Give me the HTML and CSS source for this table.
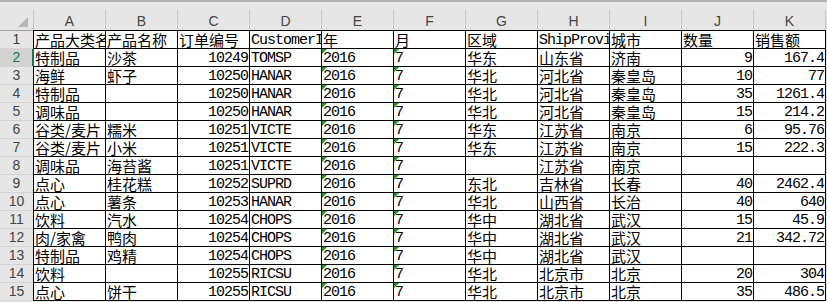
FILE: index.html
```html
<!DOCTYPE html>
<html lang="zh-CN">
<head>
<meta charset="utf-8">
<title>Sheet1</title>
<link rel="stylesheet" href="styles.css">
</head>
<body>
<div class="strip"></div>
<div class="sheet">
  <div class="corner"><svg width="33" height="20" viewBox="0 0 33 20"><polygon points="28,7 28,17 18,17" fill="#b7b7b7"/></svg></div>
  <div class="ch">A</div><div class="ch">B</div><div class="ch">C</div><div class="ch">D</div><div class="ch">E</div><div class="ch">F</div><div class="ch">G</div><div class="ch">H</div><div class="ch">I</div><div class="ch">J</div><div class="ch last">K</div>

  <div class="rh first">1</div>
  <div class="c clip">产品大类名称</div><div class="c">产品名称</div><div class="c">订单编号</div><div class="c m clip">CustomerID</div><div class="c">年</div><div class="c">月</div><div class="c">区域</div><div class="c m clip">ShipProvince</div><div class="c">城市</div><div class="c">数量</div><div class="c last">销售额</div>

  <div class="rh sel">2</div>
  <div class="c selcell">特制品</div><div class="c">沙茶</div><div class="c m n">10249</div><div class="c m">TOMSP</div><div class="c m t">2016</div><div class="c m t">7</div><div class="c">华东</div><div class="c">山东省</div><div class="c">济南</div><div class="c m n">9</div><div class="c m n last">167.4</div>

  <div class="rh">3</div>
  <div class="c">海鲜</div><div class="c">虾子</div><div class="c m n">10250</div><div class="c m">HANAR</div><div class="c m t">2016</div><div class="c m t">7</div><div class="c">华北</div><div class="c">河北省</div><div class="c">秦皇岛</div><div class="c m n">10</div><div class="c m n last">77</div>

  <div class="rh">4</div>
  <div class="c">特制品</div><div class="c"></div><div class="c m n">10250</div><div class="c m">HANAR</div><div class="c m t">2016</div><div class="c m t">7</div><div class="c">华北</div><div class="c">河北省</div><div class="c">秦皇岛</div><div class="c m n">35</div><div class="c m n last">1261.4</div>

  <div class="rh">5</div>
  <div class="c">调味品</div><div class="c"></div><div class="c m n">10250</div><div class="c m">HANAR</div><div class="c m t">2016</div><div class="c m t">7</div><div class="c">华北</div><div class="c">河北省</div><div class="c">秦皇岛</div><div class="c m n">15</div><div class="c m n last">214.2</div>

  <div class="rh">6</div>
  <div class="c">谷类/麦片</div><div class="c">糯米</div><div class="c m n">10251</div><div class="c m">VICTE</div><div class="c m t">2016</div><div class="c m t">7</div><div class="c">华东</div><div class="c">江苏省</div><div class="c">南京</div><div class="c m n">6</div><div class="c m n last">95.76</div>

  <div class="rh">7</div>
  <div class="c">谷类/麦片</div><div class="c">小米</div><div class="c m n">10251</div><div class="c m">VICTE</div><div class="c m t">2016</div><div class="c m t">7</div><div class="c">华东</div><div class="c">江苏省</div><div class="c">南京</div><div class="c m n">15</div><div class="c m n last">222.3</div>

  <div class="rh">8</div>
  <div class="c">调味品</div><div class="c">海苔酱</div><div class="c m n">10251</div><div class="c m">VICTE</div><div class="c m t">2016</div><div class="c m t">7</div><div class="c"></div><div class="c">江苏省</div><div class="c">南京</div><div class="c m n"></div><div class="c m n last"></div>

  <div class="rh">9</div>
  <div class="c">点心</div><div class="c">桂花糕</div><div class="c m n">10252</div><div class="c m">SUPRD</div><div class="c m t">2016</div><div class="c m t">7</div><div class="c">东北</div><div class="c">吉林省</div><div class="c">长春</div><div class="c m n">40</div><div class="c m n last">2462.4</div>

  <div class="rh">10</div>
  <div class="c">点心</div><div class="c">薯条</div><div class="c m n">10253</div><div class="c m">HANAR</div><div class="c m t">2016</div><div class="c m t">7</div><div class="c">华北</div><div class="c">山西省</div><div class="c">长治</div><div class="c m n">40</div><div class="c m n last">640</div>

  <div class="rh">11</div>
  <div class="c">饮料</div><div class="c">汽水</div><div class="c m n">10254</div><div class="c m">CHOPS</div><div class="c m t">2016</div><div class="c m t">7</div><div class="c">华中</div><div class="c">湖北省</div><div class="c">武汉</div><div class="c m n">15</div><div class="c m n last">45.9</div>

  <div class="rh">12</div>
  <div class="c">肉/家禽</div><div class="c">鸭肉</div><div class="c m n">10254</div><div class="c m">CHOPS</div><div class="c m t">2016</div><div class="c m t">7</div><div class="c">华中</div><div class="c">湖北省</div><div class="c">武汉</div><div class="c m n">21</div><div class="c m n last">342.72</div>

  <div class="rh">13</div>
  <div class="c">特制品</div><div class="c">鸡精</div><div class="c m n">10254</div><div class="c m">CHOPS</div><div class="c m t">2016</div><div class="c m t">7</div><div class="c">华中</div><div class="c">湖北省</div><div class="c">武汉</div><div class="c m n"></div><div class="c m n last"></div>

  <div class="rh">14</div>
  <div class="c">饮料</div><div class="c"></div><div class="c m n">10255</div><div class="c m">RICSU</div><div class="c m t">2016</div><div class="c m t">7</div><div class="c">华北</div><div class="c">北京市</div><div class="c">北京</div><div class="c m n">20</div><div class="c m n last">304</div>

  <div class="rh bottom">15</div>
  <div class="c b">点心</div><div class="c b">饼干</div><div class="c m n b">10255</div><div class="c m b">RICSU</div><div class="c m t b">2016</div><div class="c m t b">7</div><div class="c b">华北</div><div class="c b">北京市</div><div class="c b">北京</div><div class="c m n b">35</div><div class="c m n b last">486.5</div>
</div>
</body>
</html>
```
FILE: styles.css
```css
html, body {
  margin: 0;
  padding: 0;
  background: #ffffff;
}
body {
  width: 827px;
  height: 302px;
  overflow: hidden;
  background: #e6e6e6;
}
.strip {
  height: 10px;
  box-sizing: border-box;
  border-top: 2px solid #b4b4b4;
  background: #e6e6e6;
}
.sheet {
  display: grid;
  grid-template-columns: 33px repeat(10, 72px) 73px;
  grid-template-rows: 20px repeat(14, 18px) 19px;
  background: #ffffff;
  width: 826px;
}
.corner {
  background: #e6e6e6;
}
.corner svg {
  display: block;
}
.ch {
  background: #e6e6e6;
  border-left: 1px solid #c6c6c6;
  box-sizing: border-box;
  font-family: "Liberation Sans", Arial, sans-serif;
  font-size: 14px;
  color: #454545;
  text-align: center;
  line-height: 22px;
}
.ch.last {
  border-right: 1px solid #c6c6c6;
}
.rh {
  background: #e6e6e6;
  border-top: 1px solid #d2d2d2;
  box-sizing: border-box;
  font-family: "Liberation Sans", Arial, sans-serif;
  font-size: 14px;
  color: #454545;
  text-align: center;
  line-height: 17px;
}
.rh.first {
  border-top-color: #9e9e9e;
}
.rh.sel {
  background: #d3d3d3;
  color: #217346;
  box-shadow: inset -1px 0 0 #217346;
}
.rh.bottom {
  border-bottom: 1px solid #d2d2d2;
}
.c {
  position: relative;
  box-sizing: border-box;
  border-left: 1px solid #000000;
  border-top: 1px solid #000000;
  background: #ffffff;
  font-family: "Noto Sans CJK SC", sans-serif;
  font-size: 15px;
  line-height: 17px;
  color: #000000;
  padding: 0 0 0 1px;
  white-space: nowrap;
}
.c.clip {
  overflow: hidden;
}
.c.m {
  font-family: "Liberation Mono", "Noto Sans CJK SC", monospace;
  font-size: 15px;
  line-height: 15px;
  letter-spacing: -1px;
  padding-top: 2px;
  padding-left: 1px;
}
.c.n {
  text-align: right;
  padding-right: 1px;
}
.c.last {
  border-right: 1px solid #000000;
}
.c.b {
  border-bottom: 1px solid #000000;
}
.c.selcell {
  border-left-color: #217346;
}
.c.t::before {
  content: "";
  position: absolute;
  top: 0;
  left: 0;
  border-top: 5px solid #1f9a1f;
  border-right: 5px solid transparent;
}
```
